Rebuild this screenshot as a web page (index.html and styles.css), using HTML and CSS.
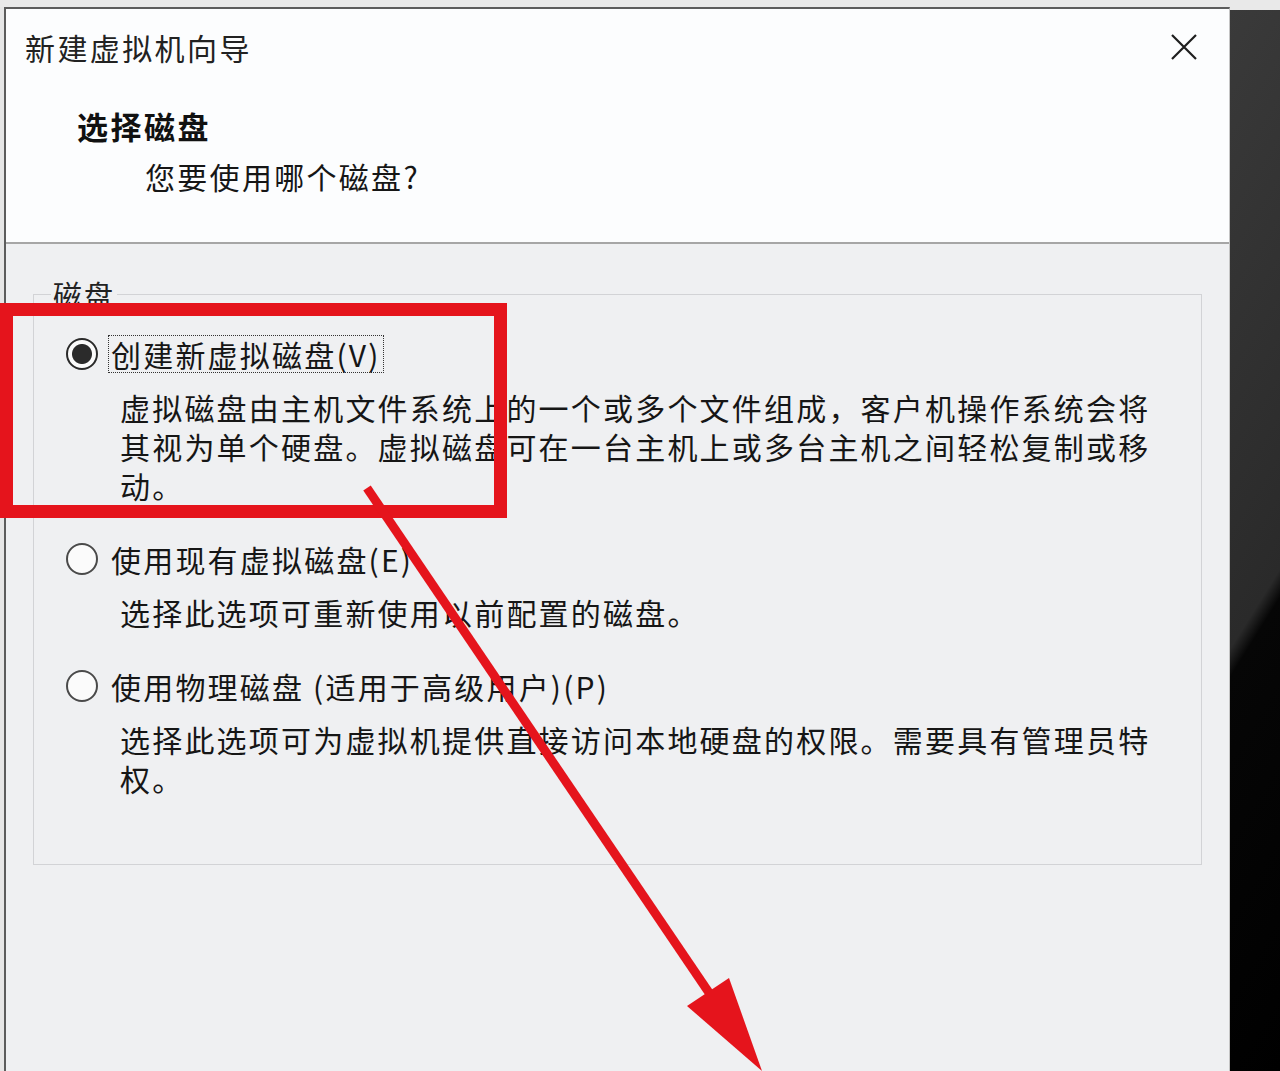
FILE: index.html
```html
<!DOCTYPE html>
<html lang="zh-CN">
<head>
<meta charset="utf-8">
<title>新建虚拟机向导</title>
<link rel="stylesheet" href="styles.css">
</head>
<body>
<div class="screen">
  <div class="topstrip"></div>
  <div class="row">
    <div class="dialog">
      <header class="header">
        <div class="titlebar">
          <span class="title">新建虚拟机向导</span>
          <svg class="close" viewBox="0 0 26 26" aria-label="关闭"><path d="M1 1 L25 25 M25 1 L1 25" /></svg>
        </div>
        <div class="heading">选择磁盘</div>
        <div class="subheading">您要使用哪个磁盘?</div>
      </header>
      <main class="body">
        <fieldset class="group">
          <legend class="legend">磁盘</legend>
          <div class="option">
            <div class="opt-row first"><span class="radio checked"></span><span class="label focus">创建新虚拟磁盘(V)</span></div>
            <p class="desc">虚拟磁盘由主机文件系统上的一个或多个文件组成，客户机操作系统会将<br>其视为单个硬盘。虚拟磁盘可在一台主机上或多台主机之间轻松复制或移<br>动。</p>
          </div>
          <div class="option">
            <div class="opt-row"><span class="radio"></span><span class="label">使用现有虚拟磁盘(E)</span></div>
            <p class="desc">选择此选项可重新使用以前配置的磁盘。</p>
          </div>
          <div class="option">
            <div class="opt-row"><span class="radio"></span><span class="label">使用物理磁盘 (适用于高级用户)(P)</span></div>
            <p class="desc">选择此选项可为虚拟机提供直接访问本地硬盘的权限。需要具有管理员特<br>权。</p>
          </div>
        </fieldset>
      </main>
    </div>
    <div class="side"></div>
  </div>
  <svg class="annot" viewBox="0 0 1280 1071" aria-hidden="true">
    <rect x="6.5" y="309.5" width="494" height="202" fill="none" stroke="#e5141c" stroke-width="13"/>
    <line x1="367" y1="488" x2="716" y2="1003" stroke="#e5141c" stroke-width="9"/>
    <polygon points="762,1071 687,1006 729,978" fill="#e5141c"/>
  </svg>
</div>
</body>
</html>
```

FILE: styles.css
```css
* { box-sizing: border-box; }

html, body {
  margin: 0;
  padding: 0;
}

body {
  width: 1280px;
  height: 1071px;
  overflow: hidden;
  font-family: "Noto Sans CJK SC", "Microsoft YaHei", sans-serif;
  color: #161616;
  background: #e8e8e8;
}

.screen {
  position: relative;
  width: 1280px;
  height: 1071px;
  display: flex;
  flex-direction: column;
}

.topstrip {
  height: 7px;
  background: #e9e9e9;
  flex: 0 0 auto;
}

.row {
  flex: 1;
  display: flex;
  padding-left: 4px;
  background: #e6e6e6;
}

.dialog {
  flex: 0 0 1226px;
  display: flex;
  flex-direction: column;
  border-left: 2px solid #5c5c5c;
  border-top: 2px solid #5c5c5c;
  border-right: 1px solid #c4c4c4;
}

.header {
  height: 235px;
  flex: 0 0 auto;
  background: #fcfdfe;
  border-bottom: 2px solid #a6a6a6;
  padding: 18px 32px 0 19px;
}

.titlebar {
  display: flex;
  justify-content: space-between;
  align-items: center;
  height: 40px;
}

.title {
  font-size: 30px;
  line-height: 40px;
  letter-spacing: 2.4px;
  color: #222;
}

.close {
  width: 26px;
  height: 26px;
  fill: none;
  stroke: #1e1e1e;
  stroke-width: 2.2;
}

.heading {
  margin: 39px 0 0 52px;
  font-size: 31px;
  font-weight: bold;
  line-height: 40px;
  letter-spacing: 2.5px;
  color: #111;
}

.subheading {
  margin: 10px 0 0 120px;
  font-size: 30px;
  line-height: 40px;
  letter-spacing: 2.3px;
}

.body {
  flex: 1;
  background: #eff0f2;
  padding: 35px 0 0 27px;
}

.group {
  width: 1169px;
  margin: 0;
  padding: 0 0 66px 0;
  border: 1px solid #d2d3d6;
}

.legend {
  margin-left: 17px;
  padding: 0 2px;
  font-size: 29px;
  line-height: 30px;
  letter-spacing: 2px;
  color: #222;
}

.opt-row {
  display: flex;
  align-items: center;
  height: 38px;
  margin: 35px 0 0 32px;
}

.opt-row.first {
  margin-top: 26px;
}

.radio {
  flex: 0 0 32px;
  width: 32px;
  height: 32px;
  border-radius: 50%;
  border: 2px solid #4a4a4a;
  background: #fbfbfb;
}

.radio.checked {
  border-color: #2a2a2a;
  background: radial-gradient(circle, #2b2b2b 0 9.5px, #fbfbfb 10.5px);
}

.label {
  margin-left: 10px;
  padding: 0 2px;
  border: 1px dotted transparent;
  font-size: 30px;
  line-height: 36px;
  letter-spacing: 2.2px;
}

.label.focus {
  border-color: #333;
}

.desc {
  margin: 15px 0 0 86px;
  font-size: 30px;
  line-height: 39px;
  letter-spacing: 2.2px;
  white-space: nowrap;
}

.side {
  flex: 1;
  border-top: 3px solid #e9e9e9;
  background: linear-gradient(122deg, #3a3a3a 0%, #2a2a2a 56%, #060606 58.5%, #000 100%);
}

.annot {
  position: absolute;
  left: 0;
  top: 0;
  width: 1280px;
  height: 1071px;
  pointer-events: none;
}
```
